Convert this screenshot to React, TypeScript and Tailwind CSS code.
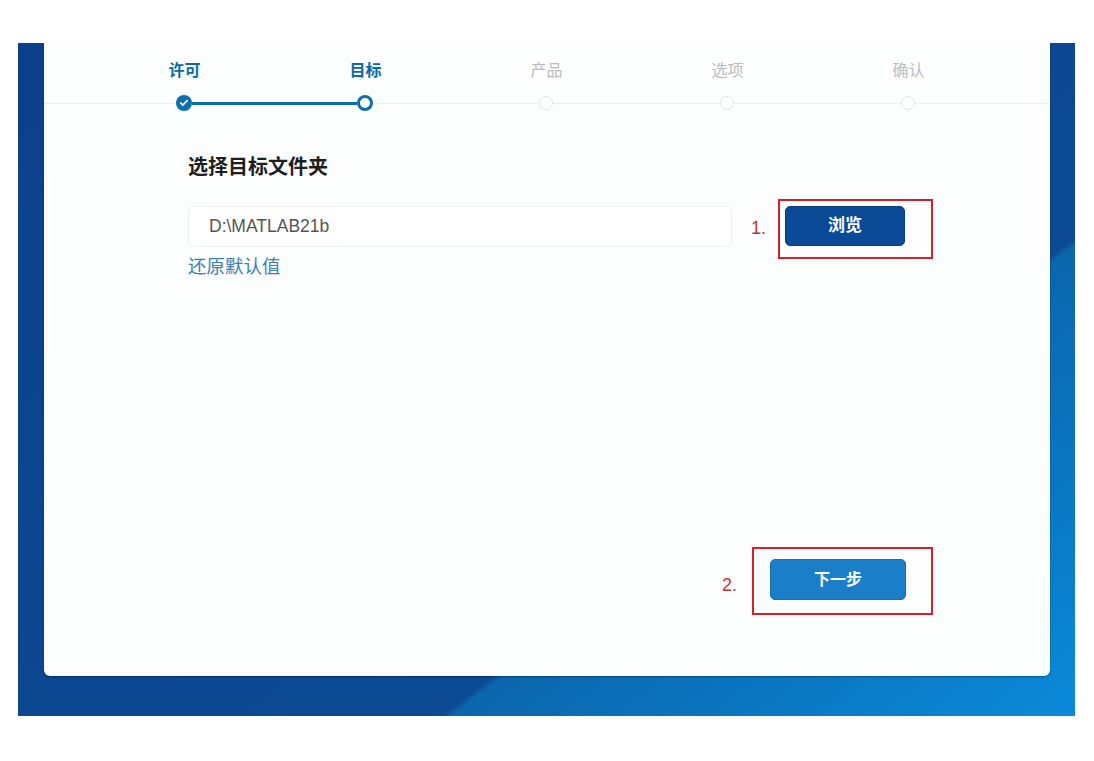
import { Check } from 'lucide-react';

const steps = [
  { label: '许可', state: 'done' },
  { label: '目标', state: 'current' },
  { label: '产品', state: 'todo' },
  { label: '选项', state: 'todo' },
  { label: '确认', state: 'todo' },
];

function Dot({ state }: { state: string }) {
  if (state === 'done')
    return (
      <div className="w-4 h-4 rounded-full bg-[#0b6fae] flex items-center justify-center shrink-0">
        <Check size={10} strokeWidth={4} className="text-white" />
      </div>
    );
  if (state === 'current')
    return <div className="w-4 h-4 rounded-full bg-white border-[3px] border-[#0b6fae] shrink-0" />;
  return <div className="w-[14px] h-[14px] rounded-full bg-white border-[1.5px] border-[#e1e4e6] shrink-0" />;
}

export default function App() {
  const font = { fontFamily: '"Liberation Sans", "Noto Sans CJK SC", sans-serif' };
  return (
    <div className="w-[1094px] h-[761px] bg-white pt-[43px] pl-[18px]" style={font}>
      <div className="w-[1057px] h-[673px] bg-[linear-gradient(143deg,#0c3f8c_0%,#0c4b94_67.5%,#0a66ad_68%,#0a8ad9_100%)]">
        <div className="ml-[26px] w-[1006px] h-[633px] bg-[#fcfdfd] rounded-b-md shadow-[0_1px_2px_rgba(0,0,0,0.35)] flex flex-col">
          {/* stepper */}
          <div className="pl-[50px] mt-[18px] grid grid-cols-[repeat(5,181px)]">
            {steps.map(s => (
              <div
                key={s.label}
                className={`text-center text-[16px] leading-5 ${s.state === 'todo' ? 'text-[#bcbcbc]' : 'text-[#0a6aa5] font-bold'}`}
              >
                {s.label}
              </div>
            ))}
          </div>
          <div className="mt-[14px] h-4 flex items-center">
            <div className="w-[132px] h-px bg-[#eceeef]" />
            <Dot state="done" />
            <div className="w-[165px] h-[3px] bg-[#0b6fae]" />
            <Dot state="current" />
            <div className="w-[166px] h-px bg-[#eceeef]" />
            <Dot state="todo" />
            <div className="w-[167px] h-px bg-[#eceeef]" />
            <Dot state="todo" />
            <div className="w-[167px] h-px bg-[#eceeef]" />
            <Dot state="todo" />
            <div className="flex-1 h-px bg-[#eceeef]" />
          </div>

          {/* content */}
          <div className="pl-[144px] mt-[43px]">
            <h2 className="text-[20px] leading-[26px] font-bold text-[#1e1e1e]">选择目标文件夹</h2>
            <div className="mt-[19px] flex items-start">
              <div className="mt-[7px] w-[544px] h-[41px] border border-[#eef0f1] rounded-md bg-white flex items-center pl-[20px] text-[17.5px] text-[#555]">
                D:\MATLAB21b
              </div>
              <span className="ml-[19px] w-[27px] mt-[17px] text-[18px] leading-6 text-[#c2333a]">1.</span>
              <div className="w-[155px] h-[60px] border-2 border-[#d41f2c] pl-[5px] pt-[5px]">
                <button className="w-[120px] h-[40px] rounded-[5px] bg-[#0b4a97] border border-[#083d80] text-white text-[17px] font-bold">
                  浏览
                </button>
              </div>
            </div>
            <a className="block mt-[-4px] text-[18.5px] leading-[24px] text-[#3d7fb5]">还原默认值</a>
          </div>

          <div className="flex-1" />

          <div className="flex justify-end items-start pr-[117px] pb-[61px]">
            <span className="w-[30px] mt-[26px] text-[18px] leading-6 text-[#c2333a]">2.</span>
            <div className="w-[181px] h-[68px] border-2 border-[#d41f2c] pl-[16px] pt-[10px]">
              <button className="w-[136px] h-[41px] rounded-[5px] bg-[#1a7ec9] border border-[#1570b5] text-white text-[16px] font-bold">
                下一步
              </button>
            </div>
          </div>
        </div>
      </div>
    </div>
  );
}
